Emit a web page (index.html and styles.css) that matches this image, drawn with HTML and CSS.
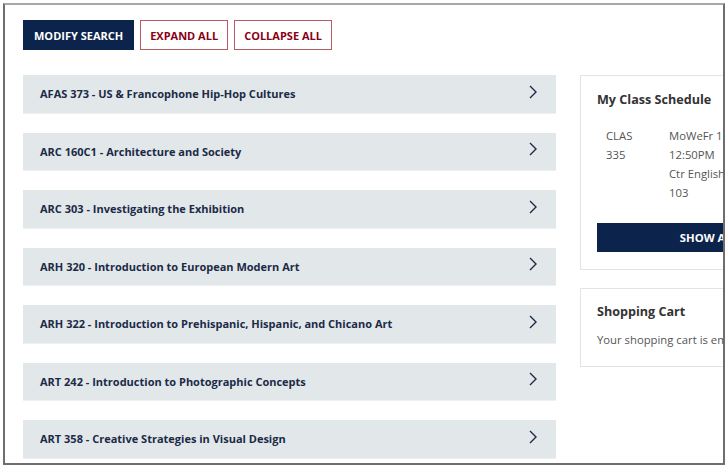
FILE: index.html
```html
<!DOCTYPE html>
<html>
<head>
<meta charset="utf-8">
<link rel="stylesheet" href="styles.css">
</head>
<body>
<div class="frame">
  <div class="toolbar">
    <button class="btn btn-primary">MODIFY SEARCH</button>
    <button class="btn btn-outline">EXPAND ALL</button>
    <button class="btn btn-outline">COLLAPSE ALL</button>
  </div>
  <div class="content">
    <div class="courses">
      <div class="course"><span>AFAS 373 - US &amp; Francophone Hip-Hop Cultures</span><svg class="chev" viewBox="0 0 10 16"><path d="M2 2 L8 8 L2 14"/></svg></div>
      <div class="course"><span>ARC 160C1 - Architecture and Society</span><svg class="chev" viewBox="0 0 10 16"><path d="M2 2 L8 8 L2 14"/></svg></div>
      <div class="course"><span>ARC 303 - Investigating the Exhibition</span><svg class="chev" viewBox="0 0 10 16"><path d="M2 2 L8 8 L2 14"/></svg></div>
      <div class="course"><span>ARH 320 - Introduction to European Modern Art</span><svg class="chev" viewBox="0 0 10 16"><path d="M2 2 L8 8 L2 14"/></svg></div>
      <div class="course"><span>ARH 322 - Introduction to Prehispanic, Hispanic, and Chicano Art</span><svg class="chev" viewBox="0 0 10 16"><path d="M2 2 L8 8 L2 14"/></svg></div>
      <div class="course"><span>ART 242 - Introduction to Photographic Concepts</span><svg class="chev" viewBox="0 0 10 16"><path d="M2 2 L8 8 L2 14"/></svg></div>
      <div class="course"><span>ART 358 - Creative Strategies in Visual Design</span><svg class="chev" viewBox="0 0 10 16"><path d="M2 2 L8 8 L2 14"/></svg></div>
    </div>
    <div class="sidebar">
      <div class="card">
        <div class="card-title">My Class Schedule</div>
        <div class="sched">
          <div class="sched-code">CLAS<br>335</div>
          <div class="sched-info">MoWeFr 12:00PM -<br>12:50PM<br>Ctr English Lang<br>103</div>
        </div>
        <button class="btn btn-primary btn-block">SHOW ALL</button>
      </div>
      <div class="card cart">
        <div class="card-title">Shopping Cart</div>
        <div class="cart-text">Your shopping cart is empty.</div>
      </div>
    </div>
  </div>
</div>
</body>
</html>
```
FILE: styles.css
```css
html, body {
  margin: 0;
  padding: 0;
  background: #ffffff;
  overflow: hidden;
}
body {
  font-family: "Open Sans", "Noto Sans", sans-serif;
}
.frame {
  margin: 3px 0 0 3px;
  width: 722px;
  height: 462px;
  border: 2px solid #6e6e6e;
  border-top-color: #a8a8a8;
  overflow: hidden;
  padding: 15px 0 0 18px;
  box-sizing: border-box;
  background: #fff;
}
.toolbar {
  display: flex;
  gap: 6px;
  height: 30px;
}
.btn {
  font-family: inherit;
  font-weight: 700;
  font-size: 11px;
  letter-spacing: 0;
  height: 30px;
  padding: 0 9px;
  border-radius: 0;
  cursor: pointer;
  box-sizing: border-box;
}
.btn-primary {
  background: #0c234b;
  color: #fff;
  border: 1px solid #0c234b;
  padding: 0 10px;
}
.btn-outline {
  background: #fff;
  color: #8b0015;
  border: 1px solid #b85a66;
}
.content {
  display: flex;
  gap: 24px;
  margin-top: 25px;
  align-items: flex-start;
}
.courses {
  width: 533px;
  flex: none;
  display: flex;
  flex-direction: column;
  gap: 19px;
}
.course {
  height: 38.5px;
  background: #e2e8ea;
  border-bottom: 1px solid #eef1f2;
  box-sizing: border-box;
  display: flex;
  align-items: center;
  justify-content: space-between;
  padding: 0 18px 0 17px;
  font-size: 11px;
  font-weight: 700;
  color: #1b2a47;
}
.chev {
  width: 10px;
  height: 16px;
  margin-top: -4px;
}
.chev path {
  fill: none;
  stroke: #1b2a47;
  stroke-width: 1.4;
}
.sidebar {
  flex: none;
  width: 258px;
  display: flex;
  flex-direction: column;
  gap: 18px;
}
.card {
  border: 1px solid #e3e3e3;
  padding: 15px 16px 17px 16px;
  box-sizing: border-box;
}
.card-title {
  font-size: 12.6px;
  font-weight: 700;
  color: #333;
  line-height: 18px;
}
.sched {
  display: flex;
  margin-top: 17px;
  font-size: 11.3px;
  color: #555;
  line-height: 19px;
}
.sched-code {
  width: 63px;
  padding-left: 9px;
  flex: none;
}
.btn-block {
  display: block;
  width: 100%;
  margin-top: 21px;
  height: 29px;
  font-size: 11.3px;
}
.cart {
  padding-top: 14px;
  padding-bottom: 17px;
}
.cart-text {
  margin-top: 10px;
  font-size: 11.3px;
  color: #555;
  line-height: 18px;
}
```
